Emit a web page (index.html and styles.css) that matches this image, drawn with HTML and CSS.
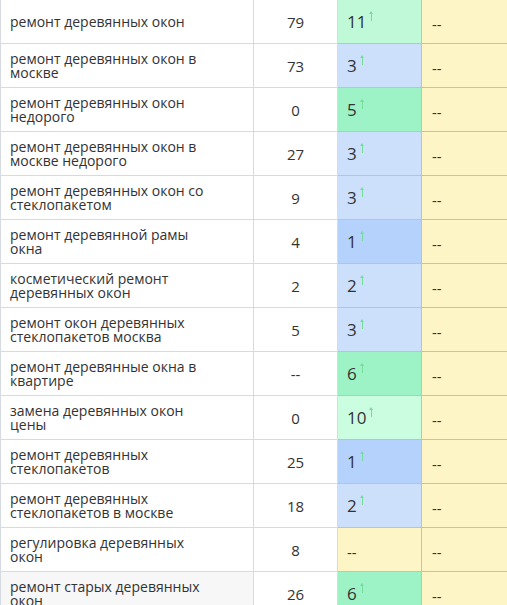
FILE: index.html
```html
<!DOCTYPE html>
<html lang="ru">
<head>
<meta charset="utf-8">
<title>Позиции</title>
<link rel="stylesheet" href="styles.css">
</head>
<body>
<table class="grid">
  <tbody>
    <tr><td class="kw"><span>ремонт деревянных окон</span></td><td class="cnt">79</td><td class="pos g1">11<i class="up"></i></td><td class="nx">--</td></tr>
    <tr><td class="kw"><span>ремонт деревянных окон в москве</span></td><td class="cnt">73</td><td class="pos b1">3<i class="up"></i></td><td class="nx">--</td></tr>
    <tr><td class="kw"><span>ремонт деревянных окон недорого</span></td><td class="cnt">0</td><td class="pos g2">5<i class="up"></i></td><td class="nx">--</td></tr>
    <tr><td class="kw"><span>ремонт деревянных окон в москве недорого</span></td><td class="cnt">27</td><td class="pos b1">3<i class="up"></i></td><td class="nx">--</td></tr>
    <tr><td class="kw"><span>ремонт деревянных окон со стеклопакетом</span></td><td class="cnt">9</td><td class="pos b1">3<i class="up"></i></td><td class="nx">--</td></tr>
    <tr><td class="kw"><span>ремонт деревянной рамы окна</span></td><td class="cnt">4</td><td class="pos b2">1<i class="up"></i></td><td class="nx">--</td></tr>
    <tr><td class="kw"><span>косметический ремонт деревянных окон</span></td><td class="cnt">2</td><td class="pos b1">2<i class="up"></i></td><td class="nx">--</td></tr>
    <tr><td class="kw"><span>ремонт окон деревянных стеклопакетов москва</span></td><td class="cnt">5</td><td class="pos b1">3<i class="up"></i></td><td class="nx">--</td></tr>
    <tr><td class="kw"><span>ремонт деревянные окна в квартире</span></td><td class="cnt">--</td><td class="pos g2">6<i class="up"></i></td><td class="nx">--</td></tr>
    <tr><td class="kw"><span>замена деревянных окон цены</span></td><td class="cnt">0</td><td class="pos g0">10<i class="up"></i></td><td class="nx">--</td></tr>
    <tr><td class="kw"><span>ремонт деревянных стеклопакетов</span></td><td class="cnt">25</td><td class="pos b2">1<i class="up"></i></td><td class="nx">--</td></tr>
    <tr><td class="kw"><span>ремонт деревянных стеклопакетов в москве</span></td><td class="cnt">18</td><td class="pos b1">2<i class="up"></i></td><td class="nx">--</td></tr>
    <tr><td class="kw"><span>регулировка деревянных окон</span></td><td class="cnt">8</td><td class="pos none">--</td><td class="nx">--</td></tr>
    <tr class="hover"><td class="kw"><span>ремонт старых деревянных окон</span></td><td class="cnt">26</td><td class="pos g2">6<i class="up"></i></td><td class="nx">--</td></tr>
  </tbody>
</table>
</body>
</html>
```
FILE: styles.css
```css
html, body {
  margin: 0;
  padding: 0;
  overflow: hidden;
  background: #fff;
}
body {
  font-family: "Open Sans", "Liberation Sans", sans-serif;
  color: #333;
}
.grid {
  border-collapse: collapse;
  table-layout: fixed;
  width: 600px;
  margin-top: -1px;
}
.grid tr {
  height: 44px;
}
.grid td {
  padding: 0;
  border: 1px solid #d6dae1;
  vertical-align: middle;
}
.kw {
  width: 243px;
  padding-left: 9px !important;
  font-size: 14px;
  line-height: 14px;
}
.kw span {
  display: block;
  max-width: 200px;
}
.cnt {
  width: 83px;
  text-align: center;
  font-size: 15px;
}
.pos {
  width: 74px;
  padding-left: 9px !important;
  font-size: 17px;
  line-height: 20px;
  border-color: #bcc2cb !important;
}
.nx {
  background: #fdf5c6;
  padding-left: 10px !important;
  font-size: 15px;
  line-height: 18px;
  padding-top: 4px !important;
  border-color: #bcc2cb !important;
}
.g0 { background: #cbfde1; }
.g1 { background: #c0f9d8; }
.g2 { background: #9df3c5; }
.b1 { background: #cce0fc; }
.b2 { background: #b4d2fb; }
.none { background: #fdf5c6; font-size: 15px; padding-top: 4px !important; }
.hover .kw { background: #f7f7f7; }
.up {
  display: inline-block;
  width: 5px;
  height: 10px;
  margin-left: 3px;
  vertical-align: 7px;
  background: linear-gradient(#74dc9d, #74dc9d) center 2px / 1px 8px no-repeat;
  position: relative;
}
.up::before {
  content: "";
  position: absolute;
  left: 0;
  top: 0;
  border-left: 2.5px solid transparent;
  border-right: 2.5px solid transparent;
  border-bottom: 3px solid #74dc9d;
}
```
